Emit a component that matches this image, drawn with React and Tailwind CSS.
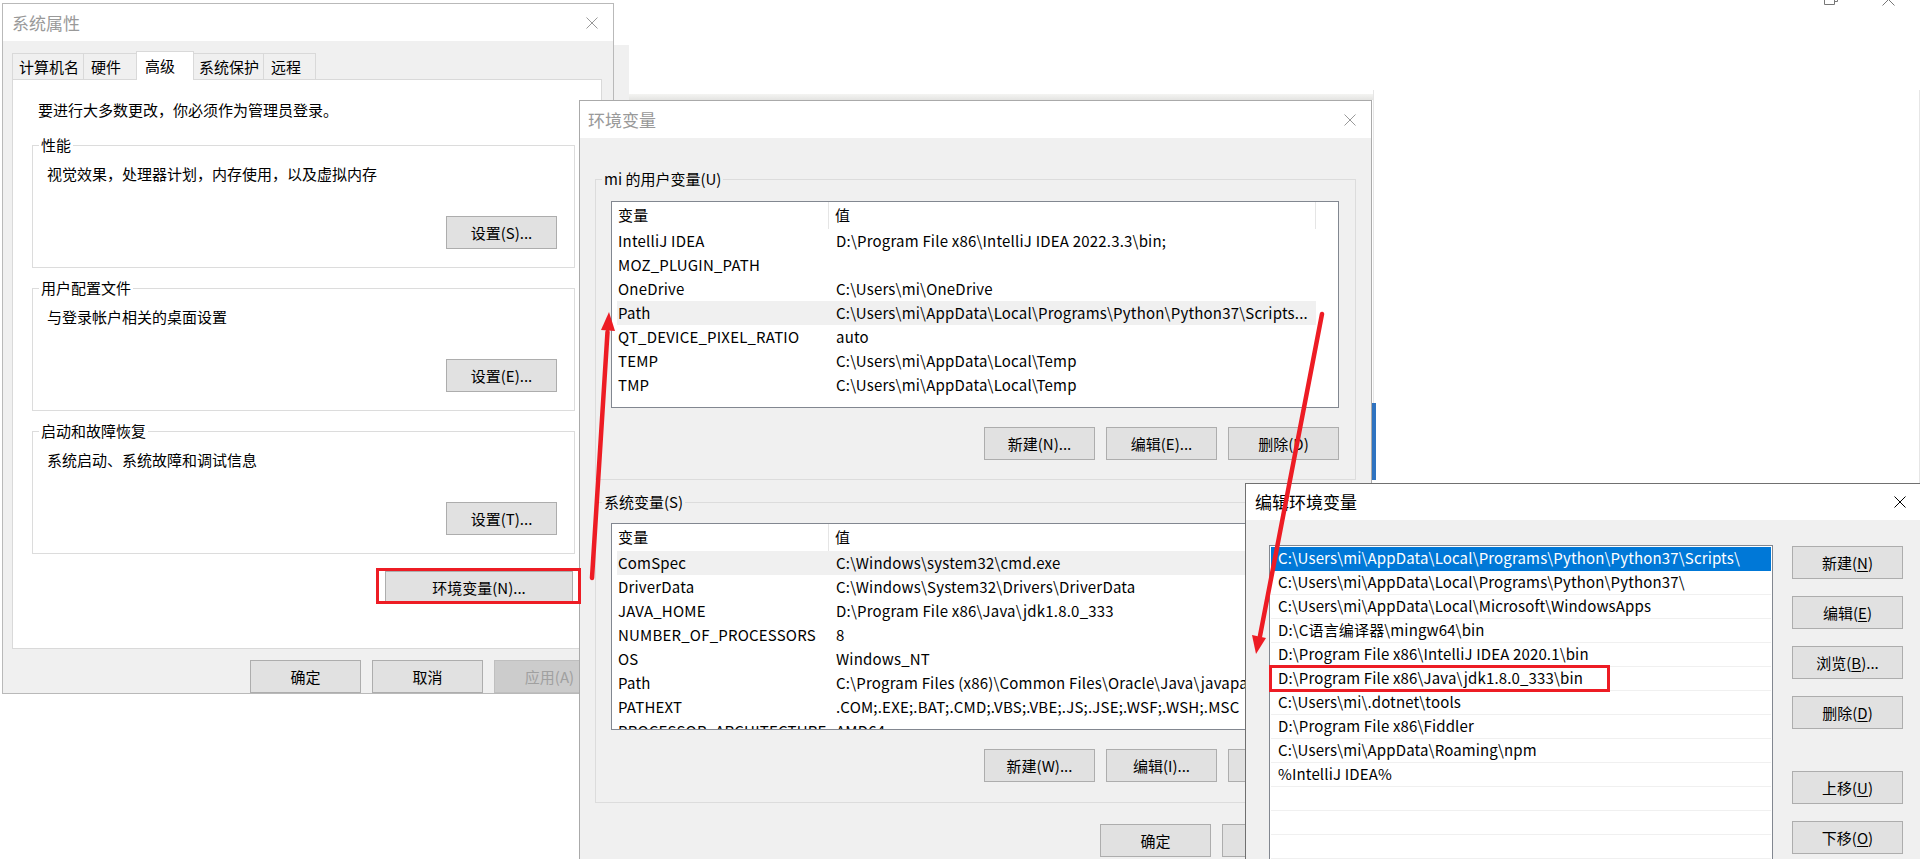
import React from 'react';
import clsx from 'clsx';

const userVars = [
  ['IntelliJ IDEA', 'D:\\Program File x86\\IntelliJ IDEA 2022.3.3\\bin;'],
  ['MOZ_PLUGIN_PATH', ''],
  ['OneDrive', 'C:\\Users\\mi\\OneDrive'],
  ['Path', 'C:\\Users\\mi\\AppData\\Local\\Programs\\Python\\Python37\\Scripts...'],
  ['QT_DEVICE_PIXEL_RATIO', 'auto'],
  ['TEMP', 'C:\\Users\\mi\\AppData\\Local\\Temp'],
  ['TMP', 'C:\\Users\\mi\\AppData\\Local\\Temp'],
];

const sysVars = [
  ['ComSpec', 'C:\\Windows\\system32\\cmd.exe'],
  ['DriverData', 'C:\\Windows\\System32\\Drivers\\DriverData'],
  ['JAVA_HOME', 'D:\\Program File x86\\Java\\jdk1.8.0_333'],
  ['NUMBER_OF_PROCESSORS', '8'],
  ['OS', 'Windows_NT'],
  ['Path', 'C:\\Program Files (x86)\\Common Files\\Oracle\\Java\\javapath;C:\\Windows'],
  ['PATHEXT', '.COM;.EXE;.BAT;.CMD;.VBS;.VBE;.JS;.JSE;.WSF;.WSH;.MSC'],
  ['PROCESSOR_ARCHITECTURE', 'AMD64'],
];

const pathItems = [
  'C:\\Users\\mi\\AppData\\Local\\Programs\\Python\\Python37\\Scripts\\',
  'C:\\Users\\mi\\AppData\\Local\\Programs\\Python\\Python37\\',
  'C:\\Users\\mi\\AppData\\Local\\Microsoft\\WindowsApps',
  'D:\\C语言编译器\\mingw64\\bin',
  'D:\\Program File x86\\IntelliJ IDEA 2020.1\\bin',
  'D:\\Program File x86\\Java\\jdk1.8.0_333\\bin',
  'C:\\Users\\mi\\.dotnet\\tools',
  'D:\\Program File x86\\Fiddler',
  'C:\\Users\\mi\\AppData\\Roaming\\npm',
  '%IntelliJ IDEA%',
  '',
  '',
  '',
];

const CloseX = ({ className }) => (
  <svg width="12" height="12" viewBox="0 0 12 12" className={className}>
    <path d="M0.5 0.5L11.5 11.5M11.5 0.5L0.5 11.5" stroke="currentColor" strokeWidth="1" fill="none" />
  </svg>
);

const Btn = ({ children, className, disabled }) => (
  <div
    className={clsx(
      'flex items-center justify-center h-[33px] w-[111px] border text-[15px] leading-none',
      disabled ? 'bg-[#cccccc] border-[#bfbfbf] text-[#a0a0a0]' : 'bg-[#e1e1e1] border-[#adadad] text-black',
      className
    )}
  >
    {children}
  </div>
);

// group box with the caption sitting on the top border
const Group = ({ label, labelBg = 'bg-white', className, children }) => (
  <div className={clsx('border border-[#dcdcdc] flex flex-col', className)}>
    <div className={clsx('-mt-[11px] ml-[6px] w-fit px-[2px] h-[20px] leading-[20px] text-[15px]', labelBg)}>
      {label}
    </div>
    {children}
  </div>
);

const VarList = ({ rows, active, className }) => (
  <div className={clsx('border border-[#828790] bg-white h-[207px] overflow-hidden text-[15px] tracking-[0.2px]', className)}>
    <div className="flex h-[27px] items-center">
      <div className="w-[217px] h-full flex items-center pl-[6px] border-r border-[#e5e5e5]">变量</div>
      <div className="w-[487px] h-full flex items-center pl-[6px] border-r border-[#e5e5e5]">值</div>
    </div>
    {rows.map(([name, value], i) => (
      <div
        key={name}
        className={clsx('ml-[5px] w-[699px] h-[24px] flex items-center whitespace-nowrap', i === active && 'bg-[#f0f0f0]')}
      >
        <div className="w-[212px] pl-[1px] overflow-hidden">{name}</div>
        <div className="w-[487px] pl-[7px] overflow-hidden">{value}</div>
      </div>
    ))}
  </div>
);

const SystemProps = () => (
  <div className="absolute left-[2px] top-[3px] w-[612px] h-[691px] border border-[#b9b9b9] bg-[#f0f0f0] flex flex-col">
    <div className="h-[37px] shrink-0 bg-white flex items-center justify-between pl-[9px] pr-[15px]">
      <span className="text-[17px] text-[#999999]">系统属性</span>
      <CloseX className="text-[#999999]" />
    </div>
    <div className="flex-1 pl-[9px] pr-[11px] pt-[10px] flex flex-col">
      <div className="flex items-end h-[28px] text-[15px] leading-none">
        <div className="w-[72px] h-[26px] flex items-center pl-[6px] border border-b-0 border-[#d9d9d9]">计算机名</div>
        <div className="w-[54px] -ml-px h-[26px] flex items-center pl-[7px] border border-b-0 border-[#d9d9d9]">硬件</div>
        <div className="relative z-10 w-[58px] -ml-px -mb-px h-[29px] flex items-center pl-[8px] pb-[2px] bg-white border border-b-0 border-[#d9d9d9]">高级</div>
        <div className="w-[71px] -ml-px h-[26px] flex items-center pl-[5px] border border-b-0 border-[#d9d9d9]">系统保护</div>
        <div className="w-[53px] -ml-px h-[26px] flex items-center pl-[7px] border border-b-0 border-[#d9d9d9]">远程</div>
      </div>
      <div className="h-[570px] bg-white border border-[#d9d9d9] pl-[19px] pr-[26px] pt-[20px] flex flex-col text-[15px]">
        <div className="ml-[6px] h-[20px] leading-[20px]">要进行大多数更改，你必须作为管理员登录。</div>
        {[
          ['性能', '视觉效果，处理器计划，内存使用，以及虚拟内存', '设置(S)...'],
          ['用户配置文件', '与登录帐户相关的桌面设置', '设置(E)...'],
          ['启动和故障恢复', '系统启动、系统故障和调试信息', '设置(T)...'],
        ].map(([label, text, btn], i) => (
          <Group key={label} label={label} className={clsx('h-[123px]', i === 0 ? 'mt-[25px]' : 'mt-[20px]')}>
            <div className="mt-[9px] ml-[14px] h-[20px] leading-[20px]">{text}</div>
            <Btn className="mt-auto mb-[18px] mr-[17px] self-end w-[107px]">{btn}</Btn>
          </Group>
        ))}
        <Btn className="mt-[17px] self-end mr-[2px] w-[188px]">环境变量(N)...</Btn>
      </div>
      <div className="flex justify-end gap-[11px] mt-[11px] -mr-[3px]">
        <Btn>确定</Btn>
        <Btn>取消</Btn>
        <Btn disabled>应用(A)</Btn>
      </div>
    </div>
  </div>
);

const EnvVars = () => (
  <div className="absolute left-[579px] top-[100px] w-[793px] h-[780px] border border-[#aaaaaa] bg-[#f0f0f0] flex flex-col">
    <div className="h-[37px] shrink-0 bg-white flex items-center justify-between pl-[8px] pr-[15px]">
      <span className="text-[17px] text-[#999999]">环境变量</span>
      <CloseX className="text-[#999999]" />
    </div>
    <div className="flex-1 px-[15px] flex flex-col">
      <Group label="mi 的用户变量(U)" labelBg="bg-[#f0f0f0]" className="mt-[41px]">
        <VarList rows={userVars} active={3} className="mt-[12px] ml-[15px] mr-[16px]" />
        <div className="flex justify-end gap-[11px] mt-[19px] mb-[19px] mr-[16px]">
          <Btn className="w-[110px]">新建(N)...</Btn>
          <Btn>编辑(E)...</Btn>
          <Btn>删除(D)</Btn>
        </div>
      </Group>
      <Group label="系统变量(S)" labelBg="bg-[#f0f0f0]" className="mt-[22px]">
        <VarList rows={sysVars} active={0} className="mt-[11px] ml-[15px] mr-[16px]" />
        <div className="flex justify-end gap-[11px] mt-[19px] mb-[20px] mr-[16px]">
          <Btn className="w-[110px]">新建(W)...</Btn>
          <Btn>编辑(I)...</Btn>
          <Btn>删除(L)</Btn>
        </div>
      </Group>
      <div className="flex justify-end gap-[11px] mt-[21px] mr-[23px]">
        <Btn>确定</Btn>
        <Btn>取消</Btn>
      </div>
    </div>
  </div>
);

const EditEnv = () => {
  const btns = [
    ['新建', 'N', ''],
    ['编辑', 'E', ''],
    ['浏览', 'B', '...'],
    ['删除', 'D', ''],
  ];
  return (
    <div className="absolute left-[1245px] top-[483px] w-[677px] h-[420px] border border-[#707070] bg-[#f0f0f0] flex flex-col">
      <div className="h-[36px] shrink-0 bg-white flex items-center justify-between pl-[9px] pr-[15px]">
        <span className="text-[17px] text-black">编辑环境变量</span>
        <CloseX className="text-black" />
      </div>
      <div className="flex-1 flex pl-[23px] pr-[17px] pt-[25px] gap-[19px] text-[15px]">
        <div className="w-[504px] h-[400px] border border-[#828790] bg-white p-px overflow-hidden tracking-[0.15px]">
          {pathItems.map((p, i) => (
            <div
              key={i}
              className={clsx(
                'h-[24px] flex items-center pl-[7px] whitespace-nowrap border-b',
                i === 0 ? 'bg-[#0078d7] text-white border-[#0078d7]' : 'border-[#f0f0f0]'
              )}
            >
              {p}
            </div>
          ))}
        </div>
        <div className="flex flex-col pt-px">
          {btns.map(([t, k, dots]) => (
            <Btn key={k} className="mb-[17px]">
              {t}(<span className="underline underline-offset-2">{k}</span>){dots}
            </Btn>
          ))}
          <Btn className="mt-[25px] mb-[17px]">
            上移(<span className="underline underline-offset-2">U</span>)
          </Btn>
          <Btn>
            下移(<span className="underline underline-offset-2">O</span>)
          </Btn>
        </div>
      </div>
    </div>
  );
};

const Annotations = () => (
  <svg className="absolute inset-0 pointer-events-none z-50" width="1920" height="859" viewBox="0 0 1920 859">
    <g fill="none" stroke="#ed1c24">
      <rect x="377.5" y="569.5" width="202" height="33" strokeWidth="3" />
      <rect x="1270.5" y="666.5" width="338" height="24" strokeWidth="3" />
      <path d="M592 578 L607.5 332" strokeWidth="4.5" strokeLinecap="round" />
      <path d="M1322 314 L1260 636" strokeWidth="4.5" strokeLinecap="round" />
    </g>
    <g fill="#ed1c24">
      <polygon points="609,312 615,331 601,330" />
      <polygon points="1256,654 1266,638 1252,635" />
    </g>
  </svg>
);

export default function App() {
  return (
    <div className="relative w-[1920px] h-[859px] overflow-hidden bg-white text-black font-['Noto_Sans_CJK_SC','Noto_Sans',sans-serif]">
      {/* bits of the windows behind */}
      <svg className="absolute left-[1822px] top-[-8px]" width="16" height="14" viewBox="0 0 16 14">
        <path d="M2.5 3.5h10v9h-10z M5.5 3.5v-3h10v9h-3" stroke="#777" fill="none" />
      </svg>
      <svg className="absolute left-[1882px] top-[-7px]" width="13" height="13" viewBox="0 0 13 13">
        <path d="M0.5 0.5L12.5 12.5M12.5 0.5L0.5 12.5" stroke="#777" fill="none" />
      </svg>
      <div className="absolute left-[614px] top-[45px] w-[15px] h-[60px] bg-[#f0f0f0]" />
      <div className="absolute left-[629px] top-[94px] w-[744px] h-[6px] bg-linear-to-b from-[#f4f4f2] to-[#e4e4e2]" />
      <div className="absolute left-[1373px] top-[90px] w-px h-[320px] bg-[#e6e6e6]" />
      <div className="absolute left-[1919px] top-[90px] w-px h-[400px] bg-[#e6e6e6]" />
      <div className="absolute left-[1372px] top-[403px] w-[4px] h-[77px] bg-[#2f73c0]" />

      <SystemProps />
      <EnvVars />
      <EditEnv />
      <Annotations />
    </div>
  );
}
